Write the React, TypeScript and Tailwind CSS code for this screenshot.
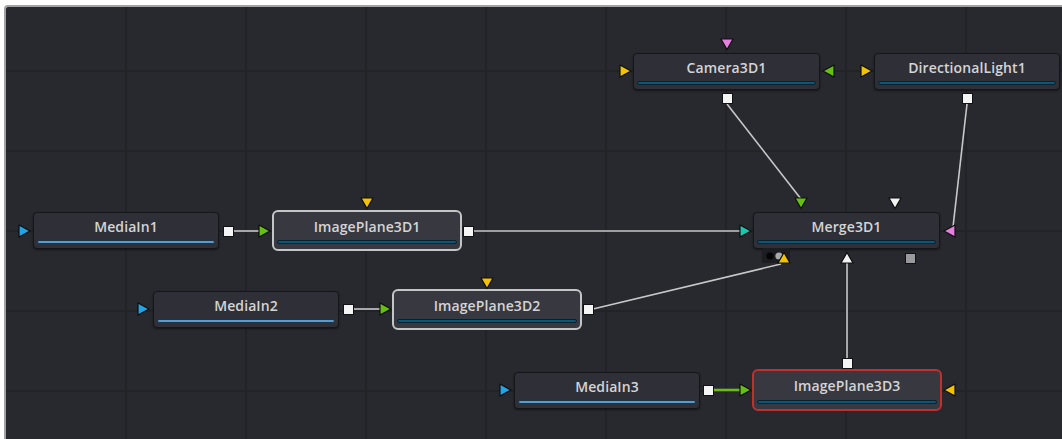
import React from "react";

type NodeDef = {
  name: string;
  x: number;
  y: number;
  w: number;
  h: number;
  kind: "media" | "plain" | "selected" | "active";
};

const nodes: NodeDef[] = [
  { name: "Camera3D1", x: 633, y: 53, w: 187, h: 37, kind: "plain" },
  { name: "DirectionalLight1", x: 874, y: 53, w: 186, h: 37, kind: "plain" },
  { name: "MediaIn1", x: 33, y: 212, w: 186, h: 37, kind: "media" },
  { name: "ImagePlane3D1", x: 272, y: 210, w: 190, h: 41, kind: "selected" },
  { name: "Merge3D1", x: 753, y: 212, w: 187, h: 37, kind: "plain" },
  { name: "MediaIn2", x: 153, y: 291, w: 186, h: 37, kind: "media" },
  { name: "ImagePlane3D2", x: 392, y: 289, w: 190, h: 41, kind: "selected" },
  { name: "MediaIn3", x: 514, y: 372, w: 186, h: 37, kind: "media" },
  { name: "ImagePlane3D3", x: 752, y: 369, w: 190, h: 42, kind: "active" },
];

function Node({ n }: { n: NodeDef }) {
  const big = n.kind === "selected" || n.kind === "active";
  const frame =
    n.kind === "selected"
      ? "border-2 border-[#c4c5c7] bg-[#383940] rounded-[6px]"
      : n.kind === "active"
      ? "border-2 border-[#c2302e] bg-[#383940] rounded-[6px]"
      : "border border-[#15161a] bg-[#2f3037] rounded-[4px] shadow-[0_1px_2px_rgba(0,0,0,0.5)]";
  const bar =
    n.kind === "media"
      ? "bg-[#5b9bcb] border-[#1d3346]"
      : "bg-[#0c5676] border-[#07212e]";
  return (
    <div
      className={`absolute flex flex-col items-stretch ${frame} ${big ? "px-[3px] pb-[5px]" : "px-[3px] pb-[4px]"}`}
      style={{ left: n.x, top: n.y, width: n.w, height: n.h }}
    >
      <div
        className={`text-center text-[14px] leading-[20px] font-semibold text-[#d4d4d6] tracking-[0.1px] ${big ? "mt-[5px]" : "mt-[4px]"}`}
        style={{ fontFamily: "'Open Sans', 'Noto Sans', sans-serif" }}
      >
        {n.name}
      </div>
      <div className={`mt-auto h-[4px] rounded-full border ${bar}`} />
    </div>
  );
}

type Tri = { d: "r" | "l" | "u" | "dn"; x: number; y: number; c: string };

const tris: Tri[] = [
  // right pointing: x = left, y = center
  { d: "r", x: 19, y: 231, c: "#1fa6e6" },
  { d: "r", x: 259, y: 231, c: "#67c00f" },
  { d: "r", x: 138, y: 309, c: "#1fa6e6" },
  { d: "r", x: 380, y: 309, c: "#67c00f" },
  { d: "r", x: 500, y: 390, c: "#1fa6e6" },
  { d: "r", x: 740, y: 390, c: "#67c00f" },
  { d: "r", x: 620, y: 71, c: "#f2c300" },
  { d: "r", x: 861, y: 71, c: "#f2c300" },
  { d: "r", x: 740, y: 231, c: "#19c9ae" },
  // left pointing: x = right, y = center
  { d: "l", x: 834, y: 71, c: "#67c00f" },
  { d: "l", x: 955, y: 231, c: "#e77fe0" },
  { d: "l", x: 955, y: 390, c: "#f2c300" },
  // down pointing: x = center, y = top
  { d: "dn", x: 727, y: 39, c: "#e77fe0" },
  { d: "dn", x: 367, y: 198, c: "#f2c300" },
  { d: "dn", x: 487, y: 278, c: "#f2c300" },
  { d: "dn", x: 801, y: 198, c: "#67c00f" },
  { d: "dn", x: 895, y: 198, c: "#f2f2f2" },
  // up pointing: x = center, y = bottom
  { d: "u", x: 784, y: 263, c: "#f2c300" },
  { d: "u", x: 847, y: 263, c: "#f2f2f2" },
];

function triPoints(t: Tri) {
  const { x, y } = t;
  switch (t.d) {
    case "r":
      return `${x},${y - 6} ${x + 11},${y} ${x},${y + 6}`;
    case "l":
      return `${x},${y - 6} ${x - 11},${y} ${x},${y + 6}`;
    case "dn":
      return `${x - 6},${y} ${x + 6},${y} ${x},${y + 10.5}`;
    case "u":
      return `${x - 6},${y} ${x + 6},${y} ${x},${y - 10.5}`;
  }
}

const squares: { x: number; y: number; c?: string }[] = [
  { x: 223, y: 226 },
  { x: 463, y: 226 },
  { x: 343, y: 304 },
  { x: 583, y: 304 },
  { x: 703, y: 385 },
  { x: 842, y: 358 },
  { x: 722, y: 93 },
  { x: 962, y: 93 },
  { x: 905, y: 253, c: "#9a9a9c" },
];

const vLines = [126, 246, 366, 486, 606, 726, 846, 966];
const hLines = [71, 151, 231, 311, 391];

export default function App() {
  return (
    <div className="relative w-[1062px] h-[439px] overflow-hidden bg-white flex pl-[4px] pt-[5px]">
      <div className="flex-1 border-l-2 border-t-2 border-[#a2a2a5] rounded-tl-[4px] bg-[#28292e]" />

      {/* free canvas layer */}
      <div className="absolute inset-0 pointer-events-none">
        <svg className="absolute inset-0" width={1062} height={439}>
          <g stroke="#222327" strokeWidth={2}>
            {vLines.map((x) => (
              <line key={"v" + x} x1={x} y1={7} x2={x} y2={439} />
            ))}
            {hLines.map((y) => (
              <line key={"h" + y} x1={6} y1={y} x2={1062} y2={y} />
            ))}
          </g>
          <g stroke="#c9c9cb" strokeWidth={1.6} fill="none">
            <line x1={233} y1={231} x2={260} y2={231} />
            <line x1={473} y1={231} x2={741} y2={231} />
            <line x1={727} y1={104} x2={801} y2={199} />
            <line x1={967} y1={104} x2={953} y2={227} />
            <line x1={593} y1={309} x2={781} y2={264} />
            <line x1={353} y1={309} x2={381} y2={309} />
            <line x1={847} y1={358} x2={847} y2={262} />
          </g>
          <line x1={713} y1={390} x2={741} y2={390} stroke="#67c00f" strokeWidth={2.6} />
        </svg>

        {nodes.map((n) => (
          <Node key={n.name} n={n} />
        ))}

        <svg className="absolute inset-0" width={1062} height={439}>
          {/* merge bottom tab */}
          <rect x={762} y={248} width={28} height={15} rx={2} fill="#1c1d21" />
          <circle cx={770} cy={256} r={3.6} fill="#050505" />
          <circle cx={779} cy={256} r={3.6} fill="#a9a9ab" />
          {tris.map((t, i) => (
            <polygon
              key={i}
              points={triPoints(t)}
              fill={t.c}
              stroke="#0e0e10"
              strokeWidth={1.2}
              strokeLinejoin="round"
            />
          ))}
          {squares.map((s, i) => (
            <rect
              key={i}
              x={s.x + 0.5}
              y={s.y + 0.5}
              width={10}
              height={10}
              fill={s.c ?? "#f4f4f4"}
              stroke="#111114"
              strokeWidth={1}
            />
          ))}
        </svg>
      </div>
    </div>
  );
}
